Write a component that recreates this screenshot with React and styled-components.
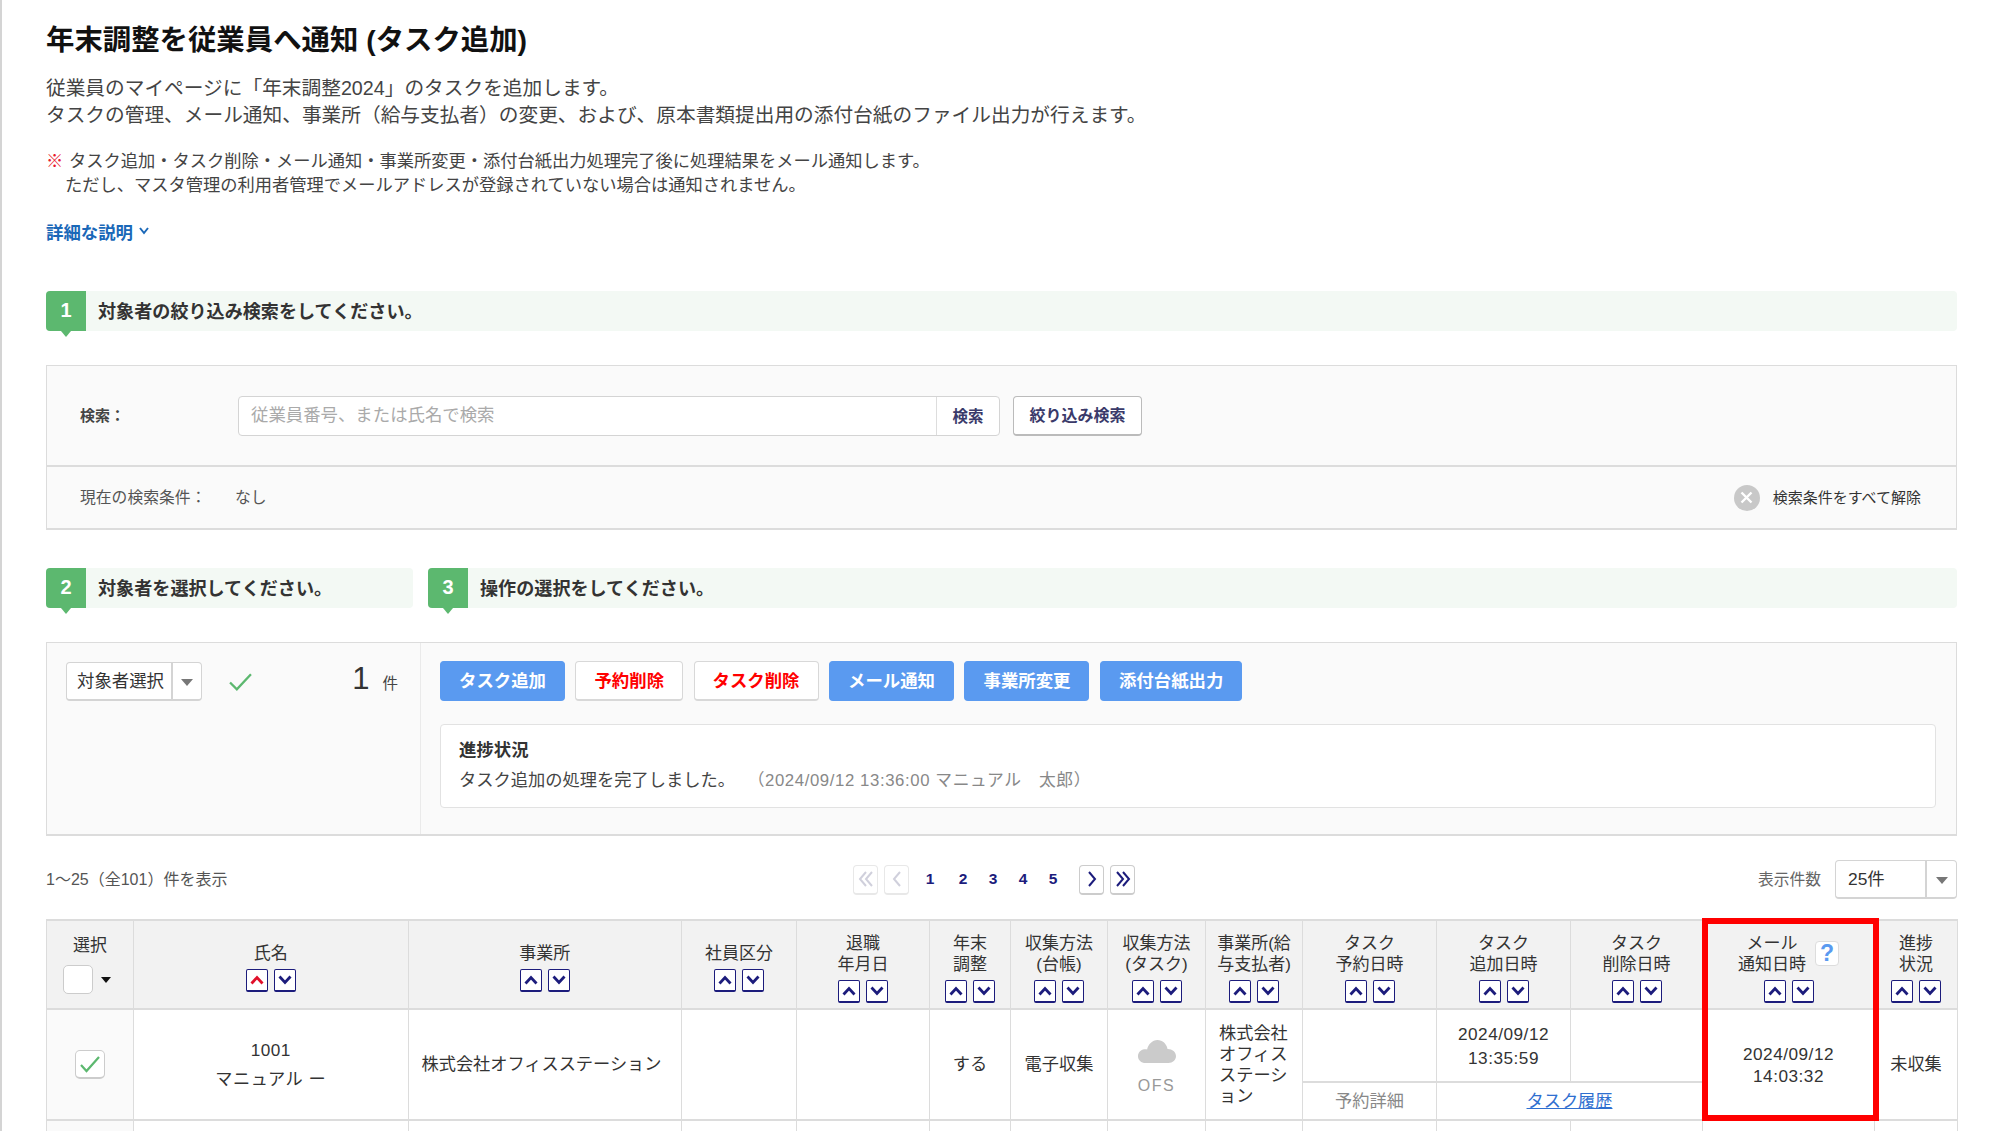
import styled, { createGlobalStyle } from "styled-components";

const Navy = "#1c1c7c";
const Green = "#5cb86f";
const Blue = "#5a9af0";
const LineColor = "#dcdcdc";

const columns = [
  { width: 87 },
  { width: 274.5, label: ["氏名"], active: true },
  { width: 273.5, label: ["事業所"] },
  { width: 115, label: ["社員区分"] },
  { width: 133, label: ["退職", "年月日"] },
  { width: 81, label: ["年末", "調整"] },
  { width: 97, label: ["収集方法", "(台帳)"] },
  { width: 98, label: ["収集方法", "(タスク)"] },
  { width: 97, label: ["事業所(給", "与支払者)"] },
  { width: 134, label: ["タスク", "予約日時"] },
  { width: 134, label: ["タスク", "追加日時"] },
  { width: 132, label: ["タスク", "削除日時"] },
  { width: 172, label: ["メール", "通知日時"], help: true },
  { width: 83, label: ["進捗", "状況"] },
];

const actions = [
  { text: "タスク追加", primary: true },
  { text: "予約削除" },
  { text: "タスク削除" },
  { text: "メール通知", primary: true },
  { text: "事業所変更", primary: true },
  { text: "添付台紙出力", primary: true },
];

function Chevron({ dir = "up", color = Navy }) {
  const points = dir === "down" ? "1.5,1.5 7,7.5 12.5,1.5" : "1.5,8.5 7,2.5 12.5,8.5";
  return (
    <svg width="14" height="10" viewBox="0 0 14 10" fill="none">
      <polyline points={points} stroke={color} strokeWidth="2.8" />
    </svg>
  );
}

function PagerArrow({ dir, double, color }) {
  const pts = (x) =>
    dir === "left"
      ? `${x + 6},2 ${x},9 ${x + 6},16`
      : `${x},2 ${x + 6},9 ${x},16`;
  return (
    <svg width="16" height="18" viewBox="0 0 16 18" fill="none">
      {double ? (
        <>
          <polyline points={pts(2)} stroke={color} strokeWidth="2" />
          <polyline points={pts(8)} stroke={color} strokeWidth="2" />
        </>
      ) : (
        <polyline points={pts(5)} stroke={color} strokeWidth="2" />
      )}
    </svg>
  );
}

function Sorter({ active }) {
  return (
    <SortPair>
      <SortButton>
        <Chevron dir="up" color={active ? "#e0102a" : Navy} />
      </SortButton>
      <SortButton>
        <Chevron dir="down" />
      </SortButton>
    </SortPair>
  );
}

function Section({ num, children }) {
  return (
    <SectionBar>
      <SectionNum>{num}</SectionNum>
      <SectionText>{children}</SectionText>
    </SectionBar>
  );
}

function App() {
  return (
    <Page>
      <GlobalStyle />
      <Title>年末調整を従業員へ通知 (タスク追加)</Title>
      <Intro>
        従業員のマイページに「年末調整2024」のタスクを追加します。
        <br />
        タスクの管理、メール通知、事業所（給与支払者）の変更、および、原本書類提出用の添付台紙のファイル出力が行えます。
      </Intro>
      <Note>
        <NoteLine>
          <NoteMark>※</NoteMark>
          タスク追加・タスク削除・メール通知・事業所変更・添付台紙出力処理完了後に処理結果をメール通知します。
        </NoteLine>
        <NoteLine $indent>
          ただし、マスタ管理の利用者管理でメールアドレスが登録されていない場合は通知されません。
        </NoteLine>
      </Note>
      <MoreLink>
        詳細な説明
        <svg width="12" height="10" viewBox="0 0 12 10" fill="none">
          <polyline points="2,2 6,7 10,2" stroke="#1a68b8" strokeWidth="2" />
        </svg>
      </MoreLink>

      <Section1>
        <Section num="1">対象者の絞り込み検索をしてください。</Section>
      </Section1>

      <SearchPanel>
        <SearchRow>
          <SearchLabel>検索：</SearchLabel>
          <SearchBox>
            <SearchInput placeholder="従業員番号、または氏名で検索" />
            <SearchButton>検索</SearchButton>
          </SearchBox>
          <FilterButton>絞り込み検索</FilterButton>
        </SearchRow>
        <ConditionRow>
          <ConditionLabel>現在の検索条件：</ConditionLabel>
          <ConditionValue>なし</ConditionValue>
          <ClearAll>
            <ClearIcon>
              <svg width="13" height="13" viewBox="0 0 13 13" fill="none">
                <path d="M1.5 1.5l10 10M11.5 1.5l-10 10" stroke="#fff" strokeWidth="2.4" />
              </svg>
            </ClearIcon>
            <ClearText>検索条件をすべて解除</ClearText>
          </ClearAll>
        </ConditionRow>
      </SearchPanel>

      <StepRow>
        <Section num="2">対象者を選択してください。</Section>
        <Section num="3">操作の選択をしてください。</Section>
      </StepRow>

      <ActionPanel>
        <TargetSide>
          <Select $width={136} $split={30}>
            <SelectText>対象者選択</SelectText>
            <SelectCaret />
          </Select>
          <TargetCheck>
            <svg width="23" height="18" viewBox="0 0 22 17" fill="none">
              <polyline points="1,9 7.5,15.5 21,1" stroke={Green} strokeWidth="2.2" />
            </svg>
          </TargetCheck>
          <Count>
            <CountNum>1</CountNum>
            <CountUnit>件</CountUnit>
          </Count>
        </TargetSide>
        <OperationSide>
          <ButtonRow>
            {actions.map((a) => (
              <ActionButton key={a.text} $primary={a.primary}>
                {a.text}
              </ActionButton>
            ))}
          </ButtonRow>
          <ProgressBox>
            <ProgressTitle>進捗状況</ProgressTitle>
            <ProgressText>
              タスク追加の処理を完了しました。
              <ProgressMeta>（2024/09/12 13:36:00 マニュアル　太郎）</ProgressMeta>
            </ProgressText>
          </ProgressBox>
        </OperationSide>
      </ActionPanel>

      <PagerRow>
        <TotalText>1～25（全101）件を表示</TotalText>
        <Pager>
          <PageButton $off>
            <PagerArrow dir="left" double color="#d0d0dc" />
          </PageButton>
          <PageButton $off>
            <PagerArrow dir="left" color="#d0d0dc" />
          </PageButton>
          <PageNumbers>
            {[1, 2, 3, 4, 5].map((n) => (
              <PageNumber key={n}>{n}</PageNumber>
            ))}
          </PageNumbers>
          <PageButton>
            <PagerArrow dir="right" color={Navy} />
          </PageButton>
          <PageButton>
            <PagerArrow dir="right" double color={Navy} />
          </PageButton>
        </Pager>
        <PerPage>
          <PerPageLabel>表示件数</PerPageLabel>
          <Select $width={122} $split={31}>
            <PerPageValue>25件</PerPageValue>
            <SelectCaret />
          </Select>
        </PerPage>
      </PagerRow>

      <TableWrap>
        <Table>
          <colgroup>
            {columns.map((c, i) => (
              <Col key={i} $w={c.width} />
            ))}
          </colgroup>
          <thead>
            <tr>
              <Th>
                <SelectHead>
                  <span>選択</span>
                  <SelectAll>
                    <CheckBox />
                    <SmallCaret />
                  </SelectAll>
                </SelectHead>
              </Th>
              {columns.slice(1).map((c, i) => (
                <Th key={i} $sortable>
                  <HeadLabel>
                    <span>
                      {c.label.map((l) => (
                        <HeadLine key={l}>{l}</HeadLine>
                      ))}
                    </span>
                    {c.help && <HelpMark>?</HelpMark>}
                  </HeadLabel>
                  <Sorter active={c.active} />
                </Th>
              ))}
            </tr>
          </thead>
          <tbody>
            <TopRow>
              <CheckCell rowSpan={2}>
                <CheckBox $checked>
                  <svg width="22" height="18" viewBox="0 0 22 18" fill="none">
                    <polyline points="2,10 7.5,16 20,2" stroke={Green} strokeWidth="2.2" />
                  </svg>
                </CheckBox>
              </CheckCell>
              <Td rowSpan={2} $tall>
                <div>1001</div>
                <div>マニュアル ー</div>
              </Td>
              <Td rowSpan={2} $left>株式会社オフィスステーション</Td>
              <Td rowSpan={2} />
              <Td rowSpan={2} />
              <Td rowSpan={2}>する</Td>
              <Td rowSpan={2}>電子収集</Td>
              <Td rowSpan={2}>
                <CloudWrap>
                  <svg width="38" height="23" viewBox="0 0 38 23" fill="#cbcbcb">
                    <path d="M7.5 23C3.2 23 0 20 0 16.2c0-3.5 2.7-6.4 6.3-6.9 1-.2 2 0 2.8.3C10 4.5 14.3 0 19.5 0c5 0 9.2 3.9 10 8.9 4.5-.2 8.5 2.9 8.5 7.1 0 3.9-3.3 7-7.5 7z" />
                  </svg>
                  <CloudLabel>OFS</CloudLabel>
                </CloudWrap>
              </Td>
              <Td rowSpan={2} $narrow>株式会社オフィスステーション</Td>
              <Td />
              <Td $date>
                <div>2024/09/12</div>
                <div>13:35:59</div>
              </Td>
              <Td />
              <Td rowSpan={2} $mail>
                <div>2024/09/12</div>
                <div>14:03:32</div>
              </Td>
              <Td rowSpan={2}>未収集</Td>
            </TopRow>
            <BottomRow>
              <Td $muted>予約詳細</Td>
              <Td colSpan={2}>
                <HistoryLink>タスク履歴</HistoryLink>
              </Td>
            </BottomRow>
            <StubRow>
              <CheckCell />
              {columns.slice(1).map((c, i) => (
                <Td key={i} />
              ))}
            </StubRow>
          </tbody>
        </Table>
        <Highlight />
      </TableWrap>
    </Page>
  );
}

const GlobalStyle = createGlobalStyle`
  html, body {
    margin: 0;
    height: 100%;
    overflow: hidden;
    background: #fff;
  }
  * {
    box-sizing: border-box;
  }
  body, input, button {
    font-family: "Liberation Sans", "Noto Sans CJK JP", sans-serif;
  }
`;

const Page = styled.div`
  height: 100vh;
  overflow: hidden;
  padding: 20px 43px 0 44px;
  border-left: 2px solid #d4d4d4;
  color: #333;
  font-size: 17px;
`;
const Title = styled.h1`
  margin: 0;
  font-size: 28.4px;
  line-height: 40px;
  font-weight: 700;
  color: #111;
`;
const Intro = styled.p`
  margin: 15px 0 0;
  font-size: 19.7px;
  line-height: 27px;
  color: #444;
`;
const Note = styled.div`
  margin-top: 20px;
  font-size: 17.25px;
  line-height: 24px;
  color: #444;
`;
const NoteLine = styled.div`
  padding-left: ${(p) => (p.$indent ? "19px" : "0")};
`;
const NoteMark = styled.span`
  display: inline-block;
  width: 23px;
  color: #e8192c;
`;
const MoreLink = styled.a`
  display: flex;
  align-items: center;
  gap: 5px;
  margin-top: 22px;
  height: 24px;
  font-size: 17.4px;
  font-weight: 700;
  color: #1a68b8;
`;
const Section1 = styled.div`
  margin-top: 48px;
`;
const SectionBar = styled.div`
  display: flex;
  align-items: center;
  height: 40px;
  background: #f3f9f4;
  border-radius: 4px;
`;
const SectionNum = styled.div`
  position: relative;
  flex: none;
  width: 40px;
  height: 40px;
  display: flex;
  align-items: center;
  justify-content: center;
  padding-bottom: 1px;
  background: ${Green};
  border-radius: 4px 0 0 4px;
  color: #fff;
  font-size: 20px;
  font-weight: 700;
  &::after {
    content: "";
    position: absolute;
    left: 15px;
    top: 100%;
    border-left: 5px solid transparent;
    border-right: 5px solid transparent;
    border-top: 6px solid ${Green};
  }
`;
const SectionText = styled.div`
  margin-left: 12px;
  padding-bottom: 3px;
  font-size: 18.1px;
  font-weight: 700;
  color: #333;
`;
const SearchPanel = styled.section`
  margin-top: 34px;
  height: 165px;
  background: #fafafa;
  border: 1px solid ${LineColor};
  border-bottom-width: 2px;
`;
const SearchRow = styled.div`
  display: flex;
  align-items: center;
  height: 101px;
  padding-left: 33px;
  border-bottom: 2px solid ${LineColor};
`;
const SearchLabel = styled.div`
  width: 158px;
  padding-bottom: 2px;
  font-size: 15px;
  font-weight: 700;
  color: #444;
`;
const SearchBox = styled.div`
  display: flex;
  width: 762px;
  height: 40px;
  background: #fff;
  border: 1px solid #d4d4d4;
  border-radius: 4px;
`;
const SearchInput = styled.input`
  flex: 1;
  min-width: 0;
  border: 0;
  padding: 0 12px;
  background: transparent;
  font-size: 17.4px;
  outline: none;
  &::placeholder {
    color: #aaa;
  }
`;
const SearchButton = styled.button`
  width: 63px;
  padding: 0 0 2px;
  border: 0;
  border-left: 1px solid #ddd;
  background: transparent;
  font-size: 15.5px;
  font-weight: 700;
  color: #3a3a6a;
`;
const FilterButton = styled.button`
  width: 129px;
  height: 40px;
  margin-left: 13px;
  padding: 0 0 2px;
  background: #fff;
  border: 1px solid #bbb;
  border-bottom-width: 2px;
  border-radius: 4px;
  font-size: 16px;
  font-weight: 700;
  color: #3a3a6a;
`;
const ConditionRow = styled.div`
  display: flex;
  align-items: center;
  height: 61px;
  padding: 0 35px 3px 33px;
  font-size: 15.8px;
  color: #555;
`;
const ConditionLabel = styled.div`
  width: 155px;
`;
const ConditionValue = styled.div``;
const ClearAll = styled.div`
  display: flex;
  align-items: center;
  gap: 13px;
  margin-left: auto;
  color: #333;
`;
const ClearText = styled.span`
  font-size: 15px;
`;
const ClearIcon = styled.div`
  display: flex;
  align-items: center;
  justify-content: center;
  width: 26px;
  height: 26px;
  margin-top: 3px;
  border-radius: 50%;
  background: #c8c8c8;
`;
const StepRow = styled.div`
  display: grid;
  grid-template-columns: 367px 1fr;
  column-gap: 15px;
  margin-top: 38px;
`;
const ActionPanel = styled.section`
  display: grid;
  grid-template-columns: 374px 1fr;
  margin-top: 34px;
  height: 194px;
  background: #fafafa;
  border: 1px solid ${LineColor};
  border-bottom-width: 2px;
`;
const TargetSide = styled.div`
  display: flex;
  align-items: flex-start;
  padding: 19px 22px 0 19px;
  border-right: 1px solid #eaeaea;
`;
const Select = styled.div`
  position: relative;
  display: flex;
  align-items: center;
  flex: none;
  width: ${(p) => p.$width}px;
  height: 39px;
  padding: 0 ${(p) => p.$split}px 3px 0;
  background: #fff;
  border: 1px solid #d4d4d4;
  border-bottom-width: 2px;
  border-radius: 4px;
  &::after {
    content: "";
    position: absolute;
    top: 0;
    bottom: 0;
    right: ${(p) => p.$split - 2}px;
    width: 2px;
    background: #d4d4d4;
  }
`;
const SelectText = styled.div`
  padding-left: 10px;
  font-size: 17.4px;
  color: #333;
`;
const PerPageValue = styled(SelectText)`
  padding-left: 12px;
`;
const SelectCaret = styled.div`
  position: absolute;
  right: 8px;
  top: 16px;
  border-left: 6px solid transparent;
  border-right: 6px solid transparent;
  border-top: 7px solid #777;
`;
const TargetCheck = styled.div`
  margin: 11px 0 0 27px;
`;
const Count = styled.div`
  display: flex;
  align-items: baseline;
  margin-left: auto;
  color: #444;
`;
const CountNum = styled.span`
  font-size: 31px;
  line-height: 34px;
  color: #333;
`;
const CountUnit = styled.span`
  margin-left: 13px;
  font-size: 15.5px;
`;
const OperationSide = styled.div`
  padding: 18px 20px 0 19px;
`;
const ButtonRow = styled.div`
  display: flex;
  gap: 10.5px;
`;
const ActionButton = styled.button`
  height: 40px;
  padding: 0 18px 2px;
  border: 1px solid ${(p) => (p.$primary ? Blue : "#d8d8d8")};
  border-bottom-width: 2px;
  border-radius: 4px;
  background: ${(p) => (p.$primary ? Blue : "#fff")};
  color: ${(p) => (p.$primary ? "#fff" : "#f00")};
  font-size: 17.4px;
  font-weight: 700;
`;
const ProgressBox = styled.div`
  margin-top: 23px;
  height: 84px;
  padding: 12px 18px;
  background: #fff;
  border: 1px solid #e2e2e2;
  border-radius: 4px;
`;
const ProgressTitle = styled.div`
  font-size: 17.4px;
  line-height: 26px;
  font-weight: 700;
  color: #333;
`;
const ProgressText = styled.div`
  margin-top: 4px;
  font-size: 17.25px;
  line-height: 26px;
  color: #444;
`;
const ProgressMeta = styled.span`
  margin-left: 21px;
  font-size: 16.75px;
  letter-spacing: 0.6px;
  color: #888;
`;
const PagerRow = styled.div`
  display: grid;
  grid-template-columns: 807px auto 1fr;
  align-items: center;
  margin-top: 24px;
  height: 39px;
`;
const TotalText = styled.div`
  padding-bottom: 3px;
  font-size: 16px;
  color: #555;
`;
const Pager = styled.div`
  display: flex;
  align-items: center;
  gap: 6px;
`;
const PageButton = styled.div`
  display: flex;
  align-items: center;
  justify-content: center;
  width: 25px;
  height: 30px;
  background: #fff;
  border: 1px solid ${(p) => (p.$off ? "#e8e8e8" : "#ccc")};
  border-bottom-width: 2px;
  border-radius: 4px;
`;
const PageNumbers = styled.div`
  display: flex;
  margin-right: 5px;
`;
const PageNumber = styled.div`
  width: 30px;
  padding-bottom: 2px;
  text-align: center;
  font-size: 15.5px;
  font-weight: 700;
  color: ${Navy};
  &:first-child {
    width: 33px;
    padding-right: 3px;
  }
`;
const PerPage = styled.div`
  display: flex;
  align-items: center;
  justify-content: flex-end;
  gap: 14px;
`;
const PerPageLabel = styled.div`
  padding-bottom: 2px;
  font-size: 15.75px;
  color: #666;
`;
const TableWrap = styled.div`
  position: relative;
  margin-top: 20px;
`;
const Table = styled.table`
  width: 1911px;
  table-layout: fixed;
  border-collapse: collapse;
  border-top: 2px solid ${LineColor};
  border-left: 1px solid ${LineColor};
  border-right: 1px solid ${LineColor};
`;
const Col = styled.col`
  width: ${(p) => p.$w}px;
`;
const Th = styled.th`
  height: 89px;
  padding: ${(p) => (p.$sortable ? "6px 0 0" : "0")};
  background: #f2f2f2;
  border-right: 1px solid ${LineColor};
  border-bottom: 2px solid ${LineColor};
  font-size: 17px;
  font-weight: 400;
  color: #333;
  text-align: center;
  vertical-align: middle;
`;
const HeadLabel = styled.div`
  display: flex;
  justify-content: center;
  align-items: center;
  gap: 9px;
`;
const HeadLine = styled.div`
  line-height: 21px;
`;
const HelpMark = styled.span`
  flex: none;
  display: flex;
  align-items: center;
  justify-content: center;
  width: 24px;
  height: 25px;
  background: #fff;
  border: 1px solid #ddd;
  border-radius: 4px;
  color: #5a9af0;
  font-size: 23px;
  font-weight: 700;
`;
const SortPair = styled.div`
  display: flex;
  justify-content: center;
  gap: 6px;
  margin-top: 5px;
`;
const SortButton = styled.div`
  display: flex;
  align-items: center;
  justify-content: center;
  width: 22px;
  height: 23px;
  background: #fff;
  border: 1px solid ${Navy};
  border-bottom-width: 2px;
  border-radius: 2px;
`;
const SelectHead = styled.div`
  display: flex;
  flex-direction: column;
  align-items: center;
  gap: 9px;
  line-height: 21px;
`;
const SelectAll = styled.div`
  display: flex;
  align-items: center;
  gap: 8px;
  margin-right: 6px;
`;
const CheckBox = styled.div`
  display: inline-flex;
  align-items: center;
  justify-content: center;
  width: 30px;
  height: 29px;
  background: #fff;
  border: 1px solid #ccc;
  border-bottom-width: ${(p) => (p.$checked ? "2px" : "1px")};
  border-radius: 5px;
`;
const SmallCaret = styled.div`
  border-left: 5px solid transparent;
  border-right: 5px solid transparent;
  border-top: 6px solid #111;
`;
const TopRow = styled.tr`
  height: 73px;
`;
const BottomRow = styled.tr`
  height: 38px;
`;
const StubRow = styled.tr`
  height: 110px;
`;
const CheckCell = styled.td`
  background: #fafafa;
  border-right: 1px solid ${LineColor};
  border-bottom: 2px solid ${LineColor};
  text-align: center;
  vertical-align: middle;
`;
const Td = styled.td`
  padding: ${(p) => (p.$left || p.$narrow ? "0 13px" : "0")};
  border-right: 1px solid ${LineColor};
  border-bottom: 2px solid ${LineColor};
  font-size: 17.2px;
  line-height: ${(p) =>
    p.$tall ? "29px" : p.$date ? "24px" : p.$mail ? "22px" : "21px"};
  letter-spacing: ${(p) => (p.$date || p.$mail || p.$tall ? "0.5px" : "0")};
  color: ${(p) => (p.$muted ? "#888" : "#333")};
  text-align: ${(p) => (p.$left || p.$narrow ? "left" : "center")};
  vertical-align: middle;
  line-break: ${(p) => (p.$narrow ? "anywhere" : "auto")};
`;
const CloudWrap = styled.div`
  display: flex;
  flex-direction: column;
  align-items: center;
  padding-top: 6px;
`;
const CloudLabel = styled.div`
  margin-top: 12px;
  font-size: 16px;
  letter-spacing: 1.5px;
  color: #999;
`;
const HistoryLink = styled.a`
  color: #2f6fd0;
  text-decoration: underline;
`;
const Highlight = styled.div`
  position: absolute;
  left: 1656px;
  top: -1px;
  width: 177px;
  height: 203px;
  border: 6px solid #f00;
  pointer-events: none;
`;

export default App;
